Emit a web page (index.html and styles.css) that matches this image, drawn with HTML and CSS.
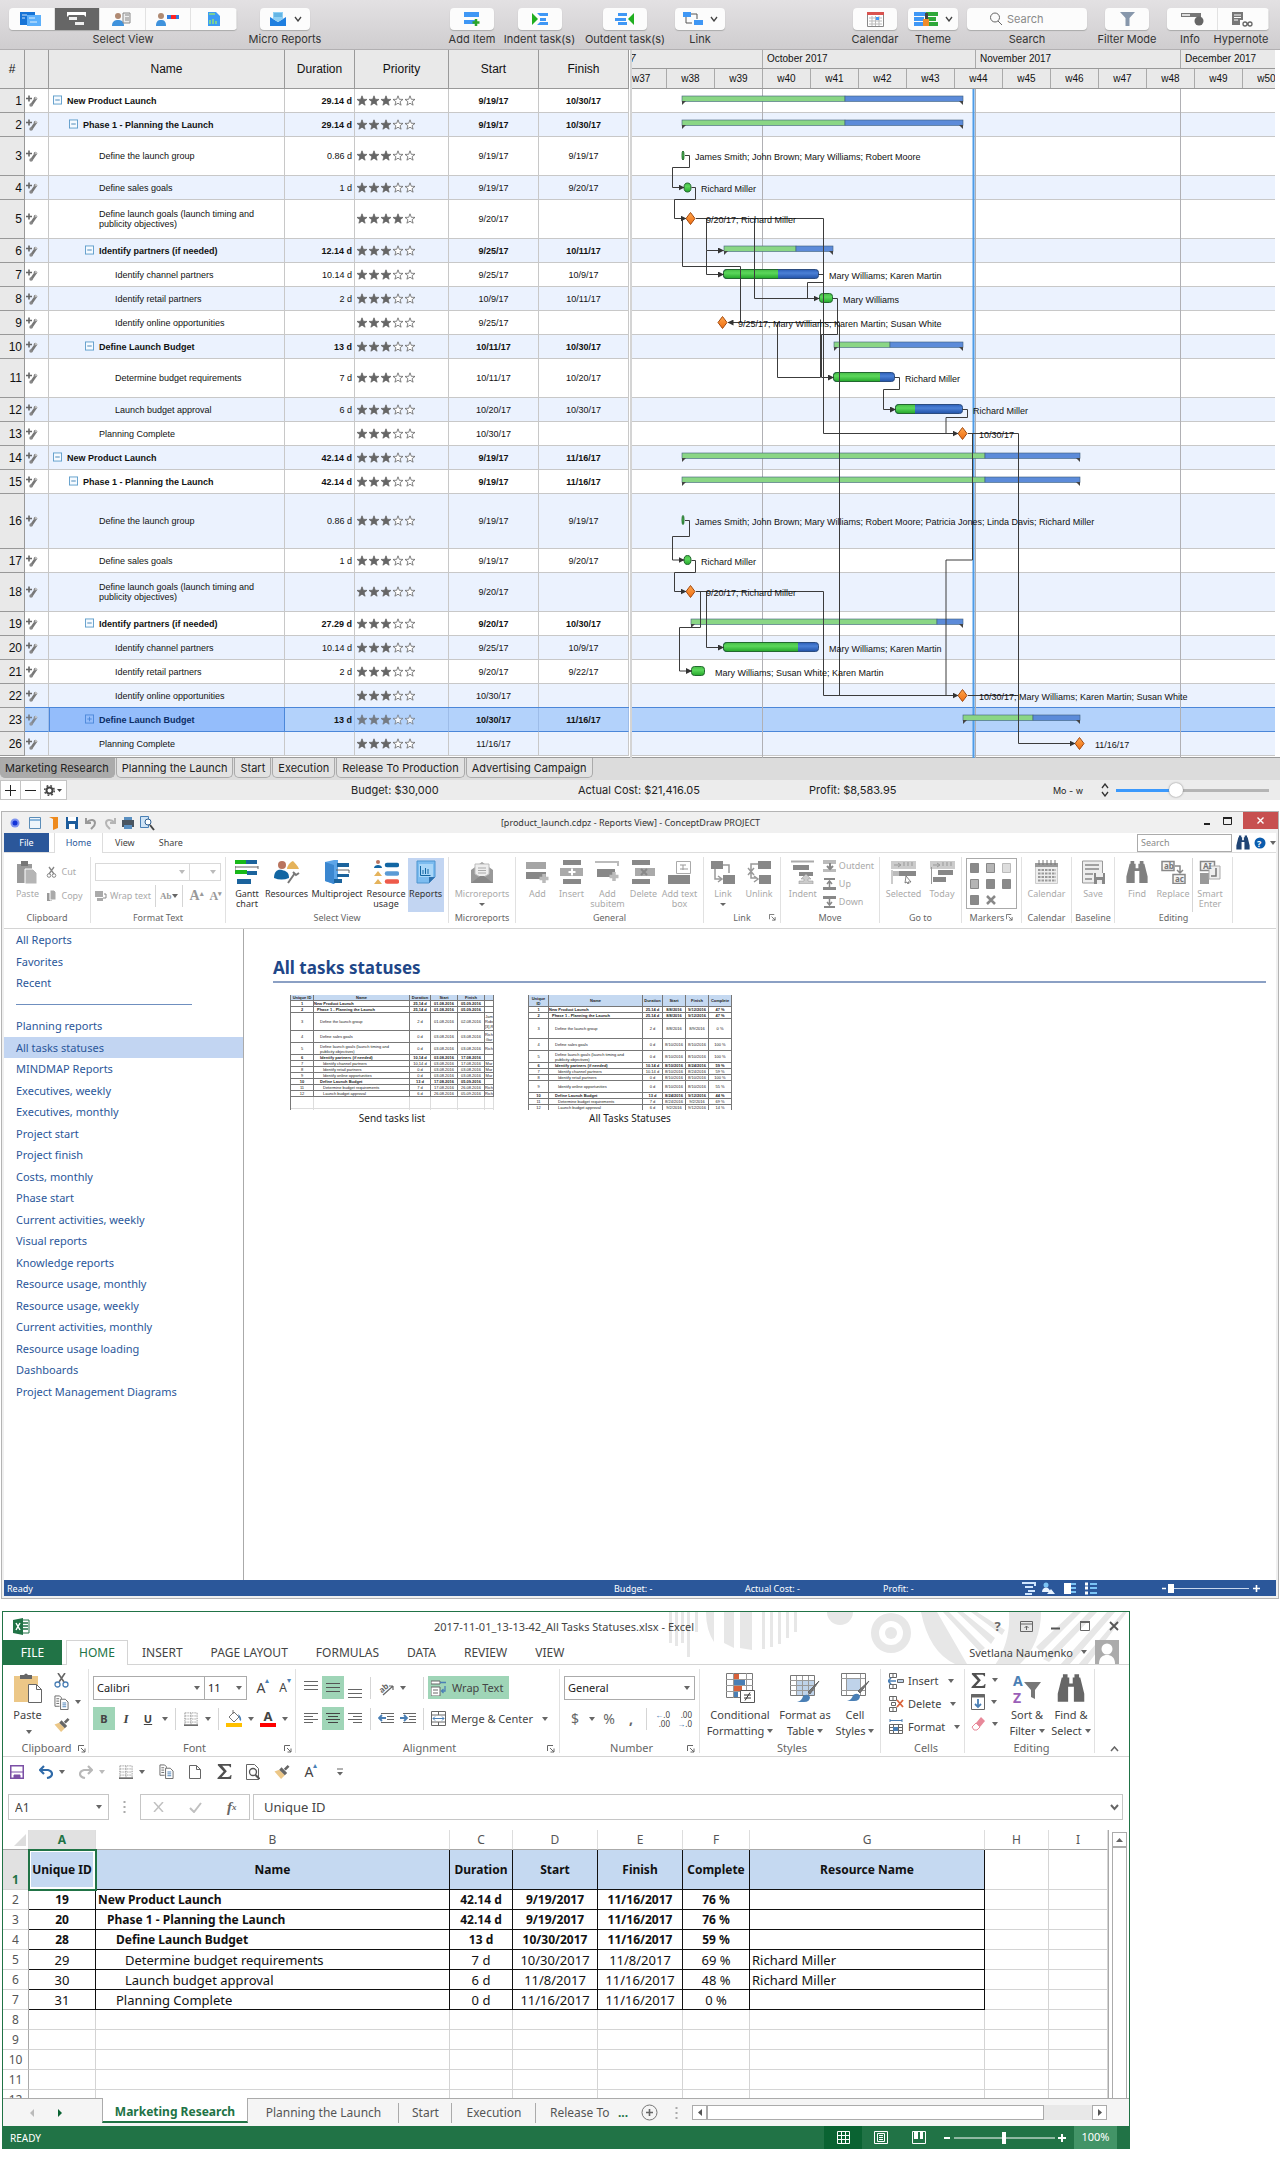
FILE: index.html
```html
<!DOCTYPE html>
<html lang="en">
<head>
<meta charset="utf-8">
<title>Project launch: tasks, reports and export</title>
<link rel="stylesheet" href="styles.css">
</head>
<body>
<svg class="defs" aria-hidden="true">
  <defs>
    <path id="star" d="M0-5.2L1.3-1.7 5-1.6 2.1.7 3.1 4.2 0 2.2-3.1 4.2-2.1.7-5-1.6-1.3-1.7Z" stroke="#666" stroke-width=".8"/>
    <symbol id="s3" viewBox="0 0 60 12"><g fill="#666"><use href="#star" x="6" y="6"/><use href="#star" x="18" y="6"/><use href="#star" x="30" y="6"/></g><g fill="#fff"><use href="#star" x="42" y="6"/><use href="#star" x="54" y="6"/></g></symbol>
    <symbol id="s4" viewBox="0 0 60 12"><g fill="#666"><use href="#star" x="6" y="6"/><use href="#star" x="18" y="6"/><use href="#star" x="30" y="6"/><use href="#star" x="42" y="6"/></g><g fill="#fff"><use href="#star" x="54" y="6"/></g></symbol>
    <symbol id="tool" viewBox="0 0 12 12"><path d="M0 3.5h6M3 .5v6" stroke="#666" stroke-width="1.6"/><path d="M5 10.500l4.500-6.500" stroke="#777" stroke-width="2.600"/><circle cx="9.500" cy="3.500" r="1.800" fill="#888"/><circle cx="5" cy="10" r="1.700" fill="#888"/><circle cx="10" cy="3" r=".8" fill="#fff"/></symbol>
    <symbol id="minus" viewBox="0 0 10 10"><rect x=".5" y=".5" width="9" height="9" fill="#f5faff" stroke="#5b9bc9"/><path d="M2.500 5h5" stroke="#3c7fb1"/></symbol>
    <symbol id="plusbox" viewBox="0 0 10 10"><rect x=".5" y=".5" width="9" height="9" fill="none" stroke="#4b87d9"/><path d="M2.500 5h5M5 2.500v5" stroke="#4b87d9"/></symbol>
    <symbol id="binoc" viewBox="0 0 24 26"><path d="M5 1h4v3h1.500v5h3V4H15V1h4v3h1l3.500 14v7h-9V12h-5v13H.5v-7L4 4h1z"/></symbol>
    <symbol id="sigma" viewBox="0 0 16 16"><path d="M1 0h14v3.500h-1.200C13.500 2 13 1.800 11 1.800H5.500l5 6-5.500 6h6.500c2 0 2.500-.5 3-2h1L15 16H.5v-1.200L7 8 .8 1.200z" fill="#505050"/></symbol>
    <symbol id="brush" viewBox="0 0 16 16"><path d="M0 8l5-2 6 6-4 4z" fill="#ecc787"/><path d="M5 6l2.500-2.500 6 6L11 12zM10 5l4-4 2 2-4 4z" fill="#666"/></symbol>
    <symbol id="copy" viewBox="0 0 16 16"><path d="M6 12H1V1h5l2 2v1M2.500 4h3M2.500 6.500h3M2.500 9h3" fill="none" stroke="#666"/><path d="M7 4.500h5l3 3V15.500H7z" fill="#fff" stroke="#666"/><path d="M9 8.500h4M9 10.500h4M9 12.500h4" stroke="#4a7fb5"/></symbol>
    <symbol id="grid" viewBox="0 0 16 16"><path d="M1 1h14M1 8h14M1 1v14M8 1v14M15 1v14M1 4.500h14M1 11.500h14" stroke="#777" stroke-dasharray="1 1"/><path d="M0 15h16" stroke="#444" stroke-width="1.500"/></symbol>
    <symbol id="launch" viewBox="0 0 8 8"><path d="M.5 6V.5H6M3 3l4 4M7 3.500V7H3.500" fill="none" stroke="#666"/></symbol>
    <linearGradient id="gTask" x2="0" y2="1"><stop offset="0" stop-color="#46bd46"/><stop offset=".4" stop-color="#5bd75b"/><stop offset="1" stop-color="#23a62a"/></linearGradient>
    <linearGradient id="bTask" x2="0" y2="1"><stop offset="0" stop-color="#2c5fb8"/><stop offset=".4" stop-color="#4b80d6"/><stop offset="1" stop-color="#2152a8"/></linearGradient>
    <linearGradient id="oTask" x2="0" y2="1"><stop offset="0" stop-color="#ffa64d"/><stop offset="1" stop-color="#ef6d10"/></linearGradient>
    <path id="mile" d="M0-6L4.500 0 0 6-4.500 0z" fill="url(#oTask)" stroke="#a34a10"/>
    <marker id="arr" viewBox="0 0 6 6" refX="5.500" refY="3" markerWidth="6" markerHeight="6" orient="auto"><path d="M0 0l6 3-6 3z" fill="#333"/></marker>
  </defs>
</svg>

<section class="mac">
  <header class="mac-bar">
    <div class="tool views"><div class="seg">
      <button aria-label="Dashboard"><svg width="22" height="16"><rect width="15" height="13" y="1" fill="#1673d6"/><rect x="7" y="4" width="14" height="11" fill="#5cb0fb"/><path d="M2 4h5M9 7h6M10 11h7M2 7h3" stroke="#fff" opacity=".8"/></svg></button>
      <button class="on" aria-label="Gantt"><svg width="20" height="14"><path d="M0 0h19v5l-2-2H2L0 5z" fill="#fff"/><path d="M2 5h8v3H2zM8 10h9v3H8z" fill="#eee"/></svg></button>
      <button aria-label="Resources"><svg width="20" height="15"><circle cx="6" cy="4" r="3" fill="#b08a72"/><path d="M0 14c0-5 3-6 6-6s6 1 6 6z" fill="#3f92dc"/><path d="M11 1h7v10h-7zM13 3h4M13 6h4M13 8h4" fill="#eee" stroke="#888"/></svg></button>
      <button aria-label="Usage"><svg width="24" height="15"><circle cx="5" cy="4" r="3" fill="#b08a72"/><path d="M0 14c0-5 2-6 5-6s5 1 5 6z" fill="#3f92dc"/><path d="M11 3h12v4H11z" fill="#2f7de0"/><path d="M15 3h5v4h-5z" fill="#f22"/></svg></button>
      <button aria-label="Reports"><svg width="14" height="16"><path d="M1 1h8l4 4v10H1z" fill="#3b9bf4"/><path d="M2 3h6M3 13V9M6 13V8M9 13v-3" stroke="#8fe07a" stroke-width="1.500"/></svg></button>
    </div><span>Select View</span></div>
    <div class="tool micro"><button class="wide"><svg width="18" height="16"><path d="M1 6l8 5 8-5v9H1z" fill="#1f7fe0"/><path d="M4 1h10v7l-5 3-5-3z" fill="#8fd0f5"/><path d="M5 3h8M5 5h8" stroke="#3b9bd4"/></svg><svg width="8" height="6"><path d="M1 1l3 4 3-4" fill="none" stroke="#444" stroke-width="1.300"/></svg></button><span>Micro Reports</span></div>
    <div class="edit">
      <div class="tool add"><button><svg width="18" height="16"><path d="M1 1h15v5H1zM1 9h13v4H1z" fill="#3f97f5"/><path d="M13 8v7M9.500 11.500h7" stroke="#2ba52b" stroke-width="2.500"/></svg></button><span>Add Item</span></div>
      <div class="tool indent"><button><svg width="18" height="14"><path d="M1 1l6 6-6 6z" fill="#1fae1f"/><path d="M6 1h11v3H9zM9 6h6v3H9zM6 13h11v-3H9z" fill="#3f97f5"/></svg></button><span>Indent task(s)</span></div>
      <div class="tool outdent"><button><svg width="20" height="14"><path d="M19 1l-6 6 6 6z" fill="#1fae1f"/><path d="M3 1h9v3H3zM0 6h11v3H0zM3 10h9v3H3z" fill="#3f97f5"/></svg></button><span>Outdent task(s)</span></div>
      <div class="tool link"><button class="wide"><svg width="20" height="14"><path d="M0 0h8v5H0zM11 8h9v5h-9z" fill="#3f97f5"/><path d="M8 2h6v5M3 5v6h6" fill="none" stroke="#555"/></svg><svg width="8" height="6"><path d="M1 1l3 4 3-4" fill="none" stroke="#444" stroke-width="1.300"/></svg></button><span>Link</span></div>
    </div>
    <div class="right">
      <div class="tool cal"><button><svg width="17" height="15"><path d="M.5.5h16v14H.5z" fill="#fff" stroke="#888"/><path d="M0 0h17v3H0z" fill="#d9534f"/><path d="M2 6h13M2 9h13M2 12h13M5 4v10M8.500 4v10M12 4v10" stroke="#bbb"/><path d="M9 5h3v3H9z" fill="#3f97f5"/></svg></button><span>Calendar</span></div>
      <div class="tool theme"><button class="wide"><svg width="24" height="14"><path d="M0 0h12v4H0zM0 5h10v4H0zM0 10h12v4H0z" fill="#3f97f5"/><path d="M12 0h12v4H12zM14 5h8v4h-8zM12 10h12v4H12z" fill="#2fa83a"/><path d="M11 1h3v7h-3z" fill="#444"/><path d="M9 7h6v7H9z" fill="#ef8d2c"/></svg><svg width="8" height="6"><path d="M1 1l3 4 3-4" fill="none" stroke="#444" stroke-width="1.300"/></svg></button><span>Theme</span></div>
      <div class="tool find"><div class="search"><svg width="14" height="14"><circle cx="6" cy="5.500" r="4.500" fill="none" stroke="#666"/><path d="M9 9l4 4" stroke="#666"/></svg><input type="search" id="mq" placeholder="Search"></div><label for="mq">Search</label></div>
      <div class="tool filter"><button><svg width="15" height="14"><path d="M0 0h15L9.500 6v8h-4V6z" fill="#8797ab"/></svg></button><span>Filter Mode</span></div>
      <div class="tool info"><div class="seg"><button aria-label="Info"><svg width="24" height="14"><path d="M1 1h20v4H1z" fill="#777"/><path d="M2 2h8v2H2z" fill="#ddd"/><circle cx="19" cy="9" r="4.500" fill="#666"/></svg></button><button aria-label="Hypernote"><svg width="22" height="15"><path d="M0 0h11v8H8v5H0z" fill="#777"/><path d="M2 3h7M2 5.500h7M2 8h4" stroke="#fff"/><path d="M11 12a2 2 0 1 1 4 0 2 2 0 1 1-4 0M16 12a2 2 0 1 1 4 0 2 2 0 1 1-4 0" fill="none" stroke="#666" stroke-width="1.300"/></svg></button></div><div class="pair"><span>Info</span><span>Hypernote</span></div></div>
    </div>
  </header>

  <div class="project">
    <table class="tasks">
      <colgroup><col class="k1"><col class="k2"><col class="k3"><col class="k4"><col class="k5"><col class="k6"><col class="k6"></colgroup>
      <thead><tr><th>#</th><th></th><th>Name</th><th>Duration</th><th>Priority</th><th>Start</th><th>Finish</th></tr></thead>
      <tbody>
      <tr class="b"><td>1</td><td><svg class="tl"><use href="#tool"/></svg></td><td class="l0"><svg class="tg"><use href="#minus"/></svg>New Product Launch</td><td>29.14 d</td><td><svg class="st"><use href="#s3"/></svg></td><td>9/19/17</td><td>10/30/17</td></tr>
      <tr class="b"><td>2</td><td><svg class="tl"><use href="#tool"/></svg></td><td class="l1"><svg class="tg"><use href="#minus"/></svg>Phase 1 - Planning the Launch</td><td>29.14 d</td><td><svg class="st"><use href="#s3"/></svg></td><td>9/19/17</td><td>10/30/17</td></tr>
      <tr class="h2"><td>3</td><td><svg class="tl"><use href="#tool"/></svg></td><td class="l3">Define the launch group</td><td>0.86 d</td><td><svg class="st"><use href="#s3"/></svg></td><td>9/19/17</td><td>9/19/17</td></tr>
      <tr><td>4</td><td><svg class="tl"><use href="#tool"/></svg></td><td class="l3">Define sales goals</td><td>1 d</td><td><svg class="st"><use href="#s3"/></svg></td><td>9/19/17</td><td>9/20/17</td></tr>
      <tr class="h2"><td>5</td><td><svg class="tl"><use href="#tool"/></svg></td><td class="l3">Define launch goals (launch timing and<br>publicity objectives)</td><td></td><td><svg class="st"><use href="#s4"/></svg></td><td>9/20/17</td><td></td></tr>
      <tr class="b"><td>6</td><td><svg class="tl"><use href="#tool"/></svg></td><td class="l2"><svg class="tg"><use href="#minus"/></svg>Identify partners (if needed)</td><td>12.14 d</td><td><svg class="st"><use href="#s3"/></svg></td><td>9/25/17</td><td>10/11/17</td></tr>
      <tr><td>7</td><td><svg class="tl"><use href="#tool"/></svg></td><td class="l4">Identify channel partners</td><td>10.14 d</td><td><svg class="st"><use href="#s3"/></svg></td><td>9/25/17</td><td>10/9/17</td></tr>
      <tr><td>8</td><td><svg class="tl"><use href="#tool"/></svg></td><td class="l4">Identify retail partners</td><td>2 d</td><td><svg class="st"><use href="#s3"/></svg></td><td>10/9/17</td><td>10/11/17</td></tr>
      <tr><td>9</td><td><svg class="tl"><use href="#tool"/></svg></td><td class="l4">Identify online opportunities</td><td></td><td><svg class="st"><use href="#s3"/></svg></td><td>9/25/17</td><td></td></tr>
      <tr class="b"><td>10</td><td><svg class="tl"><use href="#tool"/></svg></td><td class="l2"><svg class="tg"><use href="#minus"/></svg>Define Launch Budget</td><td>13 d</td><td><svg class="st"><use href="#s3"/></svg></td><td>10/11/17</td><td>10/30/17</td></tr>
      <tr class="h2"><td>11</td><td><svg class="tl"><use href="#tool"/></svg></td><td class="l4">Determine budget requirements</td><td>7 d</td><td><svg class="st"><use href="#s3"/></svg></td><td>10/11/17</td><td>10/20/17</td></tr>
      <tr><td>12</td><td><svg class="tl"><use href="#tool"/></svg></td><td class="l4">Launch budget approval</td><td>6 d</td><td><svg class="st"><use href="#s3"/></svg></td><td>10/20/17</td><td>10/30/17</td></tr>
      <tr><td>13</td><td><svg class="tl"><use href="#tool"/></svg></td><td class="l3">Planning Complete</td><td></td><td><svg class="st"><use href="#s3"/></svg></td><td>10/30/17</td><td></td></tr>
      <tr class="b"><td>14</td><td><svg class="tl"><use href="#tool"/></svg></td><td class="l0"><svg class="tg"><use href="#minus"/></svg>New Product Launch</td><td>42.14 d</td><td><svg class="st"><use href="#s3"/></svg></td><td>9/19/17</td><td>11/16/17</td></tr>
      <tr class="b"><td>15</td><td><svg class="tl"><use href="#tool"/></svg></td><td class="l1"><svg class="tg"><use href="#minus"/></svg>Phase 1 - Planning the Launch</td><td>42.14 d</td><td><svg class="st"><use href="#s3"/></svg></td><td>9/19/17</td><td>11/16/17</td></tr>
      <tr class="h3"><td>16</td><td><svg class="tl"><use href="#tool"/></svg></td><td class="l3">Define the launch group</td><td>0.86 d</td><td><svg class="st"><use href="#s3"/></svg></td><td>9/19/17</td><td>9/19/17</td></tr>
      <tr><td>17</td><td><svg class="tl"><use href="#tool"/></svg></td><td class="l3">Define sales goals</td><td>1 d</td><td><svg class="st"><use href="#s3"/></svg></td><td>9/19/17</td><td>9/20/17</td></tr>
      <tr class="h2"><td>18</td><td><svg class="tl"><use href="#tool"/></svg></td><td class="l3">Define launch goals (launch timing and<br>publicity objectives)</td><td></td><td><svg class="st"><use href="#s3"/></svg></td><td>9/20/17</td><td></td></tr>
      <tr class="b"><td>19</td><td><svg class="tl"><use href="#tool"/></svg></td><td class="l2"><svg class="tg"><use href="#minus"/></svg>Identify partners (if needed)</td><td>27.29 d</td><td><svg class="st"><use href="#s3"/></svg></td><td>9/20/17</td><td>10/30/17</td></tr>
      <tr><td>20</td><td><svg class="tl"><use href="#tool"/></svg></td><td class="l4">Identify channel partners</td><td>10.14 d</td><td><svg class="st"><use href="#s3"/></svg></td><td>9/25/17</td><td>10/9/17</td></tr>
      <tr><td>21</td><td><svg class="tl"><use href="#tool"/></svg></td><td class="l4">Identify retail partners</td><td>2 d</td><td><svg class="st"><use href="#s3"/></svg></td><td>9/20/17</td><td>9/22/17</td></tr>
      <tr><td>22</td><td><svg class="tl"><use href="#tool"/></svg></td><td class="l4">Identify online opportunities</td><td></td><td><svg class="st"><use href="#s3"/></svg></td><td>10/30/17</td><td></td></tr>
      <tr class="b sel"><td>23</td><td><svg class="tl"><use href="#tool"/></svg></td><td class="l2"><svg class="tg"><use href="#plusbox"/></svg>Define Launch Budget</td><td>13 d</td><td><svg class="st"><use href="#s3"/></svg></td><td>10/30/17</td><td>11/16/17</td></tr>
      <tr><td>26</td><td><svg class="tl"><use href="#tool"/></svg></td><td class="l3">Planning Complete</td><td></td><td><svg class="st"><use href="#s3"/></svg></td><td>11/16/17</td><td></td></tr>
      </tbody>
    </table>
    <div class="gantt">
      <div class="months"><span class="m1">7</span><span class="m2">October 2017</span><span class="m3">November 2017</span><span>December 2017</span></div>
      <div class="weeks"><span>w37</span><span>w38</span><span>w39</span><span>w40</span><span>w41</span><span>w42</span><span>w43</span><span>w44</span><span>w45</span><span>w46</span><span>w47</span><span>w48</span><span>w49</span><span>w50</span></div>
      <svg class="chart" height="669">
        <g transform="translate(0 -89)">
          <g fill="#ebf2fe"><rect y="113" width="100%" height="24"/><rect y="176" width="100%" height="24"/><rect y="239" width="100%" height="24"/><rect y="287" width="100%" height="24"/><rect y="335" width="100%" height="24"/><rect y="398" width="100%" height="24"/><rect y="446" width="100%" height="24"/><rect y="494" width="100%" height="55"/><rect y="573" width="100%" height="39"/><rect y="636" width="100%" height="24"/><rect y="684" width="100%" height="24"/><rect y="732" width="100%" height="24"/></g>
          <g fill="#c8c8c8"><rect y="112" width="100%" height="1"/><rect y="136" width="100%" height="1"/><rect y="175" width="100%" height="1"/><rect y="199" width="100%" height="1"/><rect y="238" width="100%" height="1"/><rect y="262" width="100%" height="1"/><rect y="286" width="100%" height="1"/><rect y="310" width="100%" height="1"/><rect y="334" width="100%" height="1"/><rect y="358" width="100%" height="1"/><rect y="397" width="100%" height="1"/><rect y="421" width="100%" height="1"/><rect y="445" width="100%" height="1"/><rect y="469" width="100%" height="1"/><rect y="493" width="100%" height="1"/><rect y="548" width="100%" height="1"/><rect y="572" width="100%" height="1"/><rect y="611" width="100%" height="1"/><rect y="635" width="100%" height="1"/><rect y="659" width="100%" height="1"/><rect y="683" width="100%" height="1"/><rect y="755" width="100%" height="1"/></g>
          <rect y="707" width="100%" height="25" fill="#4b87d9"/><rect y="708" width="100%" height="23" fill="#b3d2fb"/>
        </g>
        <g transform="translate(-632 -89)">
          <path d="M762.500 89v669M975.500 89v669M1180.500 89v669" stroke="#b0b0b4"/>
          <path d="M973.500 89v669" stroke="#4d9be8" stroke-width="2"/>
          <g stroke="#3f5f7c" stroke-width=".6">
            <g fill="#8ad685"><rect x="682" y="96" width="163" height="5.500"/><rect x="682" y="120" width="163" height="5.500"/><rect x="724" y="246" width="72" height="5.500"/><rect x="834" y="342" width="56" height="5.500"/><rect x="682" y="453" width="303" height="5.500"/><rect x="682" y="477" width="303" height="5.500"/><rect x="691" y="619" width="246" height="5.500"/><rect x="963" y="715" width="70" height="5.500"/></g>
            <g fill="#5c8bd9"><rect x="845" y="96" width="118" height="5.500"/><rect x="845" y="120" width="118" height="5.500"/><rect x="796" y="246" width="37" height="5.500"/><rect x="890" y="342" width="73" height="5.500"/><rect x="985" y="453" width="95" height="5.500"/><rect x="985" y="477" width="95" height="5.500"/><rect x="937" y="619" width="26" height="5.500"/><rect x="1033" y="715" width="47" height="5.500"/></g>
          </g>
          <path fill="#444" d="M682 101h4l-4 4zM963 101h-4l4 4zM682 125h4l-4 4zM963 125h-4l4 4zM724 251h4l-4 4zM833 251h-4l4 4zM834 347h4l-4 4zM963 347h-4l4 4zM682 458h4l-4 4zM1080 458h-4l4 4zM682 482h4l-4 4zM1080 482h-4l4 4zM691 624h4l-4 4zM963 624h-4l4 4zM963 720h4l-4 4zM1080 720h-4l4 4z"/>
          <g fill="url(#bTask)" stroke="#2b4c80"><rect x="723.500" y="269.500" width="95" height="9" rx="3"/><rect x="833.500" y="372.500" width="61" height="9" rx="3"/><rect x="895.500" y="404.500" width="67" height="9" rx="3"/><rect x="723.500" y="642.500" width="95" height="9" rx="3"/></g>
          <g fill="url(#gTask)" stroke="#22682f"><path d="M778 269.500h-51q-3.500 0-3.500 3v3q0 3 3.500 3h51"/><path d="M880 372.500h-43q-3.500 0-3.500 3v3q0 3 3.500 3h43"/><path d="M915 404.500h-16q-3.500 0-3.500 3v3q0 3 3.500 3h16"/><path d="M798 642.500h-71q-3.500 0-3.500 3v3q0 3 3.500 3h71"/><rect x="819.500" y="293.500" width="13" height="9" rx="3"/><rect x="691.500" y="666.500" width="13" height="9" rx="3"/><ellipse cx="683" cy="155.500" rx="1" ry="4.500"/><ellipse cx="687.500" cy="187.500" rx="3.500" ry="4.500"/><ellipse cx="683" cy="520" rx="1" ry="4.500"/><ellipse cx="687.500" cy="560" rx="3.500" ry="4.500"/></g>
          <use href="#mile" x="690.500" y="218.500"/><use href="#mile" x="722.500" y="322.500"/><use href="#mile" x="962.500" y="433.500"/><use href="#mile" x="690.500" y="591.500"/><use href="#mile" x="962.500" y="695.500"/><use href="#mile" x="1079.500" y="743.500"/>
          <g fill="none" stroke="#3c3c3c">
            <path d="M696 218.500h127.500M682.500 218.500v48h58v56M706.500 218.500v32M754.500 218.500v80M818.500 274.500h5M823.500 282.500h-16v16M728 322.500h111.500v373M777.500 322.500v55h43v-58M962.500 409.500h5v8h-21.500v16M972.500 433.500v126.500h-26.500v135.500M968 695.500h50.500"/>
            <g marker-end="url(#arr)"><path d="M685 155.500h4.500v12h-17v20h11.500"/><path d="M691.500 187.500h4v12h-21v19h11.500"/><path d="M823.500 218.500v215H958"/><path d="M706.500 250.500h17"/><path d="M706.500 250.500v24h17"/><path d="M754.500 298.500H819"/><path d="M740.500 322.500H728"/><path d="M833 298.500h4.500v36h-16v43h12"/><path d="M895 377.500h4.500v12h-16v20h12"/><path d="M968 433.500h50.500v310H1075"/><path d="M685 520.500h4.500v16h-17v23.500h11.500"/><path d="M691.500 560.500h4v12h-21v19h11.500"/><path d="M696 591.500h127.500v104H958"/><path d="M706.500 591.500v56h17"/><path d="M700.500 591.500v36h-21v43.500h12"/></g>
          </g>
          <g class="who"><text x="695" y="160">James Smith; John Brown; Mary Williams; Robert Moore</text><text x="701" y="192">Richard Miller</text><text x="706" y="223">9/20/17; Richard Miller</text><text x="829" y="279">Mary Williams; Karen Martin</text><text x="843" y="303">Mary Williams</text><text x="738" y="327">9/25/17; Mary Williams; Karen Martin; Susan White</text><text x="905" y="382">Richard Miller</text><text x="973" y="414">Richard Miller</text><text x="979" y="438">10/30/17</text><text x="695" y="525">James Smith; John Brown; Mary Williams; Robert Moore; Patricia Jones; Linda Davis; Richard Miller</text><text x="701" y="565">Richard Miller</text><text x="706" y="596">9/20/17; Richard Miller</text><text x="829" y="652">Mary Williams; Karen Martin</text><text x="715" y="676">Mary Williams; Susan White; Karen Martin</text><text x="979" y="700">10/30/17; Mary Williams; Karen Martin; Susan White</text><text x="1095" y="748">11/16/17</text></g>
        </g>
      </svg>
    </div>
  </div>
  <nav class="mac-tabs"><a href="#" class="on">Marketing Research</a><a href="#">Planning the Launch</a><a href="#">Start</a><a href="#">Execution</a><a href="#">Release To Production</a><a href="#">Advertising Campaign</a></nav>
  <footer class="mac-foot">
    <div class="ops"><button aria-label="Add"><svg width="11" height="11"><path d="M5.500 0v11M0 5.500h11" stroke="#222"/></svg></button><button aria-label="Remove"><svg width="11" height="11"><path d="M0 5.500h11" stroke="#222"/></svg></button><button aria-label="Settings" class="gear"><svg width="20" height="11"><circle cx="5.500" cy="5.500" r="3" fill="none" stroke="#444" stroke-width="2"/><circle cx="5.500" cy="5.500" r="4.800" fill="none" stroke="#444" stroke-dasharray="1.800 2" stroke-width="1.500"/><path d="M13 4h5l-2.500 3z" fill="#444"/></svg></button></div>
    <span class="f1">Budget: $30,000</span><span class="f2">Actual Cost: $21,416.05</span><span class="f3">Profit: $8,583.95</span>
    <div class="scale"><span>Mo - w</span><svg width="8" height="14"><path d="M1 5l3-4 3 4M1 9l3 4 3-4" fill="none" stroke="#333" stroke-width="1.300"/></svg><input type="range" aria-label="Time scale" min="0" max="100" value="38"></div>
  </footer>
</section>

<section class="win">
  <header class="wt">
    <svg width="150" height="16" class="qi"><circle cx="8" cy="8" r="4.500" fill="#7d92ee"/><circle cx="8" cy="8" r="2.500" fill="#1233d8"/><path d="M22.500 2.500h11v11h-11z" fill="#eef5fb" stroke="#5b8db8"/><path d="M23 5h10" stroke="#8bb7dc" stroke-width="2"/><path d="M42 2h9v11l-5 2V4z" fill="#ee8a1d"/><path d="M59 2h12v12H59z" fill="#1c5c9c"/><path d="M61 2h8v4h-8zM62 9h6v5h-6z" fill="#fff"/><path d="M79 8c5-5 9-3 9 0s-2 4-4 6M79 3v5h5" fill="none" stroke="#999" stroke-width="2"/><path d="M108 8c-5-5-9-3-9 0s2 4 4 6M108 3v5h-5" fill="none" stroke="#b5b5b5" stroke-width="2"/><path d="M115 5h12v7h-12z" fill="#4a5560"/><path d="M117 2h8v3h-8zM117 10h8v4h-8z" fill="#5a8fc0"/><path d="M133.500 1.500h8v11h-8z" fill="#cfe3f5" stroke="#4a80b5"/><circle cx="141" cy="7" r="3" fill="#fff" stroke="#2f5f90"/><path d="M143 10l4 5" stroke="#444" stroke-width="2"/></svg>
    <h1>[product_launch.cdpz - Reports View] - ConceptDraw PROJECT</h1>
    <div class="wb"><button aria-label="Minimize"><svg width="8" height="8"><path d="M1 7h6" stroke="#222" stroke-width="2"/></svg></button><button aria-label="Maximize"><svg width="9" height="8"><path d="M.5 1h8v6.500h-8z" fill="none" stroke="#222"/><path d="M0 1h9" stroke="#222" stroke-width="2"/></svg></button><button class="x" aria-label="Close"><svg width="7" height="7"><path d="M.5.5l6 6M6.500.5l-6 6" stroke="#fff" stroke-width="1.400"/></svg></button></div>
  </header>
  <nav class="wtabs"><button class="file">File</button><a href="#" class="on">Home</a><a href="#">View</a><a href="#">Share</a><div class="ws"><input type="search" placeholder="Search" aria-label="Search reports"><svg width="14" height="15" fill="#1f4474"><use href="#binoc"/></svg><svg width="12" height="12"><circle cx="6" cy="6" r="5.500" fill="#0b5cad"/><text x="3" y="10" class="q">?</text></svg><i class="car"></i></div></nav>
  <div class="ribbon">
    <div class="g g1"><div class="gb"><button class="big dis w32"><svg width="22" height="24"><path d="M1 4h15v19H1z" fill="#9a9a9a"/><path d="M5 1h7v5H5z" fill="#777"/><path d="M9 9h8l4 4v11H9z" fill="#b5b5b5" stroke="#fff"/></svg><span>Paste</span></button><div class="col2"><button class="sm dis"><svg width="12" height="12"><path d="M3 1l5 7M8 1L3 8" stroke="#888" stroke-width="1.300"/><circle cx="3" cy="9.500" r="1.800" fill="none" stroke="#888"/><circle cx="8" cy="9.500" r="1.800" fill="none" stroke="#888"/></svg>Cut</button><button class="sm dis"><svg width="12" height="12"><path d="M1 3h5v8H1z" fill="#999"/><path d="M4 0h4l2 2v8H4z" fill="#aaa" stroke="#fff"/></svg>Copy</button></div></div><b>Clipboard</b></div>
    <div class="g g2"><div class="gb v"><div class="combos"><span class="cb c95"><select aria-label="Font" disabled><option></option></select></span><span class="cb c31"><select aria-label="Size" disabled><option></option></select></span></div><div class="ftrow"><button class="sm dis"><svg width="12" height="12"><path d="M0 1h8v6H0zM2 8h6v3H2z" fill="#aaa"/><path d="M9 4h2v4H8" fill="none" stroke="#888"/></svg>Wrap text</button><i class="vs"></i><button class="ab">Ab<i class="car"></i></button><i class="vs"></i><button class="a1">A<sup>▴</sup></button><button class="a2">A<sup>▾</sup></button></div></div><b>Format Text</b></div>
    <div class="g g3"><div class="gb">
      <button class="big w33"><svg width="24" height="24"><path d="M0 0h11v4H0zM0 10h12v4H0z" fill="#18b818"/><path d="M11 0h11v4H11zM2 19h14v5H2zM12 11h10v4H12z" fill="#1b639c"/><path d="M0 7h23M0 6v5M23 6v3" stroke="#666"/></svg><span>Gantt<br>chart</span></button>
      <button class="big w46"><svg width="26" height="24"><circle cx="8" cy="5" r="4" fill="#b9745e"/><path d="M0 18c0-7 4-9 8-8s7 2 7 8c-5 2-10 2-15 0z" fill="#1266a3"/><path d="M13 9c0-3 3-7 6-8 2 2 5 5 6 8z" fill="#e5b35b"/><path d="M14 23l7-10M19 12l3 3 3-2" stroke="#777" stroke-width="2" fill="none"/></svg><span>Resources</span></button>
      <button class="big w55"><svg width="26" height="24"><path d="M1 2l9-2h4v21l-4 3-9-3z" fill="#5da5e8"/><path d="M1 2l9 3v19l-9-3z" fill="#3b87d0"/><path d="M13 3h12v4H13zM13 14h12v3H13zM10 19h8v4h-8z" fill="#1b639c"/><path d="M12 10h13v3" stroke="#666" fill="none"/></svg><span>Multiproject</span></button>
      <button class="big w43"><svg width="26" height="24"><circle cx="5" cy="2" r="2" fill="#b9745e"/><path d="M1 8c0-4 8-4 8 0z" fill="#1266a3"/><path d="M1 16l4-5 4 5zM1 24l4-5 4 5z" fill="#e5b35b"/><path d="M14 5h10" stroke="#1266a3" stroke-width="4.500" stroke-linecap="round"/><path d="M14 13.500h10" stroke="#5b9bd5" stroke-width="4.500" stroke-linecap="round"/><path d="M14 21.500h10" stroke="#ee5a4a" stroke-width="4.500" stroke-linecap="round"/></svg><span>Resource<br>usage</span></button>
      <button class="big w36 on"><svg width="20" height="24"><path d="M1 1h18v16l-6 6H1z" fill="#7cbcf0" stroke="#4d94cf"/><path d="M3 4h14v13H3z" fill="#a9d6f8"/><path d="M4.500 6v9.500h10M7 14v-4M9.500 14V8M12 14V9" fill="none" stroke="#1266a3"/><path d="M13 23v-6h6z" fill="#2f72b0"/></svg><span>Reports</span></button>
    </div><b>Select View</b></div>
    <div class="g g4"><div class="gb"><button class="big dis w64"><svg width="24" height="24"><path d="M1 10L12 2l11 8v13H1z" fill="#999"/><path d="M5 4h14v10l-7 4-7-4z" fill="#eee" stroke="#bbb"/><path d="M8 8h8M8 10.500h8M8 13h8" stroke="#aaa"/><path d="M1 23l9-7h4l9 7z" fill="#888"/></svg><span>Microreports</span><i class="car"></i></button></div><b>Microreports</b></div>
    <div class="g g5"><div class="gb">
      <button class="big dis w34"><svg width="24" height="24"><path d="M0 2h20v7H0z" fill="#a5a5a5"/><path d="M0 12h20v7H0z" fill="#888"/><path d="M18 14v9M13.500 18.500h9" stroke="#bbb" stroke-width="3.500"/></svg><span>Add</span></button>
      <button class="big dis w34"><svg width="24" height="24"><path d="M3 0h18v5H3zM3 19h18v5H3z" fill="#888"/><path d="M0 8h23v8H0z" fill="#aaa"/><path d="M12 8.500v7M8.500 12h7" stroke="#fff" stroke-width="2"/></svg><span>Insert</span></button>
      <button class="big dis w38"><svg width="25" height="24"><path d="M0 2h23v4" stroke="#bbb" stroke-width="2" fill="none"/><path d="M2 9h18v8H2z" fill="#888"/><path d="M19 12v9M14.500 16.500h9" stroke="#bbb" stroke-width="3.500"/></svg><span>Add<br>subitem</span></button>
      <button class="big dis w34"><svg width="24" height="24"><path d="M0 0h18v5H0zM0 19h18v5H0z" fill="#888"/><path d="M3 8h20v8H3z" fill="#aaa"/><path d="M9 9l6 6M15 9l-6 6" stroke="#888" stroke-width="2"/></svg><span>Delete</span></button>
      <button class="big dis w38"><svg width="26" height="24"><path d="M9.500 1.500h14v12h-14z" fill="none" stroke="#aaa"/><path d="M13 5h6M13 9h8M16 5v5" stroke="#999"/><path d="M1 15h22v9H1z" fill="#888"/></svg><span>Add text<br>box</span></button>
    </div><b>General</b></div>
    <div class="g g6"><div class="gb"><button class="big dis w34"><svg width="24" height="24"><path d="M0 1h12v8H0zM12 15h12v9H12z" fill="#888"/><path d="M12 5h6v8M4 9v10h6M7 16l4 3-4 3" fill="none" stroke="#999" stroke-width="1.500"/></svg><span>Link</span><i class="car"></i></button><button class="big dis w38"><svg width="24" height="24"><path d="M11 1h13v8H11zM12 15h12v9H12z" fill="#888"/><path d="M11 4H4v14h6M7 16l4 3-4 3M1 8l6 7M7 8l-6 7" fill="none" stroke="#999" stroke-width="1.500"/></svg><span>Unlink</span></button></div><b>Link<svg width="7" height="7" class="far"><use href="#launch"/></svg></b></div>
    <div class="g g7"><div class="gb"><button class="big dis w34"><svg width="24" height="24"><path d="M0 1.500h23" stroke="#aaa" stroke-width="2"/><path d="M2 5h16v5H2zM8 12h14v4H8z" fill="#888"/><path d="M15 14l5 5h-3v2h5v3H8v-3h5v-2h-3z" fill="#ccc" stroke="#999" stroke-width=".6"/></svg><span>Indent</span></button><div class="col3"><button class="sm dis"><svg width="13" height="12"><path d="M0 0h13v4H0zM0 9h13v3H0z" fill="#bbb"/><path d="M7 3v5M4 6l3 3 3-3" stroke="#888" stroke-width="2" fill="none"/></svg>Outdent</button><button class="sm dis"><svg width="13" height="12"><path d="M1 0h11v2H1zM0 9h13v3H0z" fill="#888"/><path d="M6.500 3v6M4 6l2.500-3L9 6" stroke="#888" stroke-width="1.500" fill="none"/></svg>Up</button><button class="sm dis"><svg width="13" height="12"><path d="M1 10h11v2H1zM0 0h13v3H0z" fill="#888"/><path d="M6.500 3v6M4 6l2.500 3L9 6" stroke="#888" stroke-width="1.500" fill="none"/></svg>Down</button></div></div><b>Move</b></div>
    <div class="g g8"><div class="gb"><button class="big dis w43"><svg width="26" height="24"><path d="M0 1h25v8H0z" fill="#ccc"/><path d="M1 24V10" stroke="#999"/><path d="M2 11h14v5H2z" fill="#bbb"/><path d="M8 11h17v5H8z" fill="#888"/><path d="M3 5h6M7 3l3 2-3 2M13 2v4M17 2v4M21 2v4" fill="none" stroke="#999"/><path d="M15 16l5 6h-3l1 2-1 .5-1-2.500-2 1z" fill="#fff" stroke="#666" stroke-width=".8"/></svg><span>Selected</span></button><button class="big dis w34"><svg width="25" height="24"><path d="M0 1h25v8H0z" fill="#ccc"/><path d="M1.500 24V7" stroke="#999"/><path d="M8 10h15v5H8zM3 17h13v5H3z" fill="#888"/><path d="M3 5h6M7 3l3 2-3 2M13 2v4M17 2v4M21 2v4" fill="none" stroke="#999"/></svg><span>Today</span></button></div><b>Go to</b></div>
    <div class="g g9"><div class="gb"><svg class="marks" width="51" height="51"><rect x=".5" y=".5" width="50" height="50" fill="#fff" stroke="#aaa"/><g stroke="#888"><path d="M4.500 5.500h8v9h-8zM20.500 21.500h8v9h-8zM36.500 21.500h8v9h-8zM4.500 37.500h8v9h-8z" fill="#8a8a8a"/><path d="M20.500 5.500h8v9h-8zM4.500 21.500h8v9h-8z" fill="#b5b5b5"/><path d="M36.500 5.500h8v9h-8z" fill="#ddd" stroke="#bbb"/></g><path d="M21 38l8 8M29 38l-8 8" stroke="#888" stroke-width="2.500"/></svg></div><b>Markers<svg width="7" height="7"><use href="#launch"/></svg></b></div>
    <div class="g g10"><div class="gb"><button class="big dis w43"><svg width="26" height="24"><path d="M1.500 4.500h22v19h-22z" fill="#eee" stroke="#ccc"/><path d="M1 3h23v4H1z" fill="#999"/><path d="M5 0v5M9 0v5M13 0v5M17 0v5M21 0v5" stroke="#777"/><path d="M4 10h18M4 13.500h18M4 17h18M4 20.500h18" stroke="#999" stroke-width="2" stroke-dasharray="2.500 1"/></svg><span>Calendar</span></button></div><b>Calendar</b></div>
    <div class="g g11"><div class="gb"><button class="big dis w34"><svg width="24" height="24"><path d="M1.500 1h20v22h-20z" fill="#eee" stroke="#999" /><path d="M4 5h14M4 9h14M4 14h8M4 19h7" stroke="#888" stroke-width="1.600"/><path d="M13 13h11v11H13z" fill="#888"/><path d="M15 13h7v4h-7zM16 20h5v4h-5z" fill="#eee"/></svg><span>Save</span></button></div><b>Baseline</b></div>
    <div class="g g12"><div class="gb"><button class="big dis w34"><svg width="24" height="24" fill="#808080"><use href="#binoc"/></svg><span>Find</span></button><button class="big dis w38"><svg width="25" height="24"><path d="M1 1.500h12v9H1zM12 14.500h12v9H12z" fill="#f5f5f5" stroke="#888" stroke-width="1.500"/><path d="M14 6h5v7M16 10l3 3 3-3" fill="none" stroke="#888" stroke-width="1.500"/><text x="3" y="9" class="ic">ab</text><text x="14" y="22" class="ic">ac</text></svg><span>Replace</span></button><i class="vs tall"></i><button class="big dis w34"><svg width="22" height="24"><path d="M1.500 1.500h14v9h-14z" fill="#f5f5f5" stroke="#888" stroke-width="1.500"/><path d="M1 13h9v11H1z" fill="#999"/><path d="M10 6h11v13H10z" fill="#eee" stroke="#aaa"/><text x="4" y="9" class="ic">AI</text><path d="M17 8v8h-5" fill="none" stroke="#777" stroke-width="1.500"/></svg><span>Smart<br>Enter</span></button></div><b>Editing</b></div>
  </div>
  <div class="wbody">
    <nav class="side"><ul>
      <li><a href="#">All Reports</a></li><li><a href="#">Favorites</a></li><li><a href="#">Recent</a></li><li class="rule"><hr></li>
      <li><a href="#">Planning reports</a></li><li class="on"><a href="#">All tasks statuses</a></li><li><a href="#">MINDMAP Reports</a></li><li><a href="#">Executives, weekly</a></li><li><a href="#">Executives, monthly</a></li><li><a href="#">Project start</a></li><li><a href="#">Project finish</a></li><li><a href="#">Costs, monthly</a></li><li><a href="#">Phase start</a></li><li><a href="#">Current activities, weekly</a></li><li><a href="#">Visual reports</a></li><li><a href="#">Knowledge reports</a></li><li><a href="#">Resource usage, monthly</a></li><li><a href="#">Resource usage, weekly</a></li><li><a href="#">Current activities, monthly</a></li><li><a href="#">Resource usage loading</a></li><li><a href="#">Dashboards</a></li><li><a href="#">Project Management Diagrams</a></li>
    </ul></nav>
    <main class="reports">
      <h2>All tasks statuses</h2>
      <div class="cards">
        <figure><div class="thumb"><table class="mini m-a"><colgroup><col class="a1c"><col class="a2c"><col class="a3c"><col class="a4c"><col class="a4c"><col class="a5c"></colgroup>
          <tr><th>Unique ID</th><th>Name</th><th>Duration</th><th>Start</th><th>Finish</th><th></th></tr>
          <tr class="b"><td>1</td><td>New Product Launch</td><td>25,14 d</td><td>01.08.2016</td><td>05.09.2016</td><td></td></tr>
          <tr class="b"><td>2</td><td class="i1">Phase 1 - Planning the Launch</td><td>25,14 d</td><td>01.08.2016</td><td>05.09.2016</td><td></td></tr>
          <tr class="r18"><td>3</td><td class="i2">Define the launch group</td><td>2 d</td><td>01.08.2016</td><td>02.08.2016</td><td>Jam<br>Robe<br>[3],R</td></tr>
          <tr class="r12"><td>4</td><td class="i2">Define sales goals</td><td>0 d</td><td>03.08.2016</td><td>03.08.2016</td><td>Rich<br>Gar</td></tr>
          <tr class="r12"><td>5</td><td class="i2">Define launch goals (launch timing and<br>publicity objectives)</td><td>0 d</td><td>03.08.2016</td><td>03.08.2016</td><td>Rich</td></tr>
          <tr class="b"><td>6</td><td class="i2">Identify partners (if needed)</td><td>10,14 d</td><td>03.08.2016</td><td>17.08.2016</td><td></td></tr>
          <tr><td>7</td><td class="i3">Identify channel partners</td><td>10,14 d</td><td>03.08.2016</td><td>17.08.2016</td><td>Mar</td></tr>
          <tr><td>8</td><td class="i3">Identify retail partners</td><td>0 d</td><td>03.08.2016</td><td>03.08.2016</td><td>Mar</td></tr>
          <tr><td>9</td><td class="i3">Identify online opportunities</td><td>0 d</td><td>03.08.2016</td><td>03.08.2016</td><td>Mar</td></tr>
          <tr class="b"><td>10</td><td class="i2">Define Launch Budget</td><td>13 d</td><td>17.08.2016</td><td>05.09.2016</td><td></td></tr>
          <tr><td>11</td><td class="i3">Determine budget requirements</td><td>7 d</td><td>17.08.2016</td><td>26.08.2016</td><td>Rich</td></tr>
          <tr><td>12</td><td class="i3">Launch budget approval</td><td>6 d</td><td>26.08.2016</td><td>05.09.2016</td><td>Rich</td></tr>
          <tr class="e r12"><td></td><td></td><td></td><td></td><td></td><td></td></tr><tr class="e r12"><td></td><td></td><td></td><td></td><td></td><td></td></tr>
        </table></div><figcaption>Send tasks list</figcaption></figure>
        <figure><div class="thumb"><table class="mini m-b"><colgroup><col class="b1c"><col class="b2c"><col class="b3c"><col class="b4c"><col class="b4c"><col class="b5c"></colgroup>
          <tr class="r12"><th>Unique<br>ID</th><th>Name</th><th>Duration</th><th>Start</th><th>Finish</th><th>Complete</th></tr>
          <tr class="b"><td>1</td><td>New Product Launch</td><td>25.14 d</td><td>8/8/2016</td><td>9/12/2016</td><td>47 %</td></tr>
          <tr class="b"><td>2</td><td class="i1">Phase 1 - Planning the Launch</td><td>25.14 d</td><td>8/8/2016</td><td>9/12/2016</td><td>47 %</td></tr>
          <tr class="r20"><td>3</td><td class="i2">Define the launch group</td><td>2 d</td><td>8/8/2016</td><td>8/9/2016</td><td>0 %</td></tr>
          <tr class="r12"><td>4</td><td class="i2">Define sales goals</td><td>0 d</td><td>8/10/2016</td><td>8/10/2016</td><td>100 %</td></tr>
          <tr class="r12"><td>5</td><td class="i2">Define launch goals (launch timing and<br>publicity objectives)</td><td>0 d</td><td>8/10/2016</td><td>8/10/2016</td><td>100 %</td></tr>
          <tr class="b"><td>6</td><td class="i2">Identify partners (if needed)</td><td>10.14 d</td><td>8/10/2016</td><td>8/24/2016</td><td>59 %</td></tr>
          <tr><td>7</td><td class="i3">Identify channel partners</td><td>10.14 d</td><td>8/10/2016</td><td>8/24/2016</td><td>59 %</td></tr>
          <tr><td>8</td><td class="i3">Identify retail partners</td><td>0 d</td><td>8/10/2016</td><td>8/10/2016</td><td>100 %</td></tr>
          <tr class="r12"><td>9</td><td class="i3">Identify online opportunities</td><td>0 d</td><td>8/10/2016</td><td>8/10/2016</td><td>55 %</td></tr>
          <tr class="b"><td>10</td><td class="i2">Define Launch Budget</td><td>13 d</td><td>8/24/2016</td><td>9/12/2016</td><td>44 %</td></tr>
          <tr><td>11</td><td class="i3">Determine budget requirements</td><td>7 d</td><td>8/24/2016</td><td>9/2/2016</td><td>69 %</td></tr>
          <tr><td>12</td><td class="i3">Launch budget approval</td><td>6 d</td><td>9/2/2016</td><td>9/12/2016</td><td>14 %</td></tr>
        </table></div><figcaption>All Tasks Statuses</figcaption></figure>
      </div>
    </main>
  </div>
  <footer class="wfoot"><span class="s0">Ready</span><span class="s1">Budget: -</span><span class="s2">Actual Cost: -</span><span class="s3">Profit: -</span><svg class="s4" width="80" height="13"><path d="M0 1h13v3M3 5h8M6 9h7M3 12h7" stroke="#cfe6ff" stroke-width="2" fill="none"/><circle cx="24" cy="3" r="2.500" fill="#7cc4f5"/><path d="M20 10c0-6 8-6 8 0zM25 12l4-5 4 5z" fill="#e8f3ff"/><path d="M42 1h7v11h-7z" fill="#fff"/><path d="M49 2h5M49 6h5M49 10h5" stroke="#7cc4f5" stroke-width="2"/><path d="M63 2h3M63 6h3M63 11h3" stroke="#fff" stroke-width="3"/><path d="M68 2h7M68 6h7M68 11h7" stroke="#7cc4f5" stroke-width="2"/></svg><svg class="s5" width="100" height="13"><path d="M0 6.500h4M91 6.500h7M94.500 3v7" stroke="#fff" stroke-width="1.600"/><path d="M9 6.500h78" stroke="#c8d6ec"/><path d="M6 2h6v9H6z" fill="#fff"/></svg></footer>
</section>

<section class="xl">
  <header class="xh">
    <svg class="deco" width="460" height="53" fill="#e7e7e7"><path d="M0 0h3v31H0zM6 0h3v34H6zM12 0h3v31h-3zM18 0h3v45h-3zM26 0h3v20h-3zM37 0h8v30q-8-12-8-30zM55 0h10v36l-10-5zM71 0h12v38l-12-2zM93 0h3v37h-3zM101 0h3v35h-3zM109 0h3v32h-3zM117 0h3v26h-3zM125 0h3v20h-3z"/><path d="M158 0h26a13 13 0 0 1-26 0z"/><path fill-rule="evenodd" d="M202 21a20 20 0 1 1 40 0 20 20 0 1 1-40 0m8 0a12 12 0 1 0 24 0 12 12 0 1 0-24 0"/><circle cx="222" cy="21" r="6"/><path d="M252 0h16l30 52h-12q-26-12-34-52zM274 0h6l36 36-5 4zM288 0h6l32 26-4 6zM302 0h6l28 18-3 5zM340 0h32q0 32-22 53h-24q16-24 14-53zM404 0h8l-40 40-5-5zM420 0h8l-48 50-6-3zM438 0h8l-46 53h-9zM454 0h4l-40 53h-9z"/></svg>
    <div class="xt"><svg width="17" height="17"><path d="M8 2h8v13H8z" fill="#fff" stroke="#217346"/><path d="M10 5h5M10 8h5M10 11h5" stroke="#217346" stroke-width="1.500"/><path d="M0 2l10-2v17L0 15z" fill="#217346"/><path d="M3 5l4 7M7 5l-4 7" stroke="#fff" stroke-width="1.500"/></svg><h1>2017-11-01_13-13-42_All Tasks Statuses.xlsx - Excel</h1>
      <div class="xb"><button class="hq">?</button><button aria-label="Ribbon options"><svg width="13" height="11"><path d="M.5.5h12v10H.5zM.5 3h12M6.500 9V5M4.500 7l2-2 2 2" fill="none" stroke="#666"/></svg></button><button aria-label="Minimize"><svg width="9" height="11"><path d="M0 7.500h9" stroke="#555" stroke-width="2"/></svg></button><button aria-label="Maximize"><svg width="10" height="10"><path d="M.5.5h9v9h-9z" fill="none" stroke="#666"/><path d="M0 1h10" stroke="#666" stroke-width="2"/></svg></button><button aria-label="Close"><svg width="10" height="10"><path d="M1 1l8 8M9 1L1 9" stroke="#555" stroke-width="1.800"/></svg></button></div>
    </div>
    <nav class="xtabs"><button class="file">FILE</button><a href="#" class="on">HOME</a><a href="#">INSERT</a><a href="#">PAGE LAYOUT</a><a href="#">FORMULAS</a><a href="#">DATA</a><a href="#">REVIEW</a><a href="#">VIEW</a><span class="user">Svetlana Naumenko<i class="car"></i><svg width="24" height="24"><path d="M0 0h24v24H0z" fill="#ababab"/><circle cx="12" cy="9" r="5.500" fill="#fff"/><path d="M4 24c0-7 4-9 8-9s8 2 8 9z" fill="#fff"/></svg></span></nav>
  </header>
  <div class="xr">
    <div class="xg x1"><div class="xc top"><button class="xbig w40"><svg width="28" height="30"><path d="M0 3h24v26H0z" fill="#ecc787"/><path d="M6 6V2h4q2-3 4 0h4v4z" fill="#666"/><path d="M14.500 11.500h8l5 5v13h-13z" fill="#fff" stroke="#666"/><path d="M22.500 11.500v5h5" fill="none" stroke="#666"/></svg><span>Paste</span><i class="car"></i></button><div class="xcol"><button aria-label="Cut"><svg width="15" height="15"><path d="M4 0l6 9M11 0L5 9" stroke="#666" stroke-width="1.600"/><circle cx="3.500" cy="11.500" r="2.500" fill="none" stroke="#4a7fb5" stroke-width="1.300"/><circle cx="11.500" cy="11.500" r="2.500" fill="none" stroke="#4a7fb5" stroke-width="1.300"/></svg></button><button aria-label="Copy" class="cc"><svg width="15" height="15"><use href="#copy"/></svg><i class="car"></i></button><button aria-label="Format painter"><svg width="16" height="15"><use href="#brush"/></svg></button></div></div><b>Clipboard<svg width="8" height="8"><use href="#launch"/></svg></b></div>
    <div class="xg x2"><div class="xc rows"><div class="row"><span class="cb x111"><select aria-label="Font name"><option>Calibri</option></select></span><span class="cb x43"><select aria-label="Font size"><option>11</option></select></span><button class="t gA">A<sup>▴</sup></button><button class="t gB">A<sup>▾</sup></button></div>
      <div class="row"><button class="t on"><strong>B</strong></button><button class="t it">I</button><button class="t un">U</button><button class="c" aria-label="Underline options"><i class="car"></i></button><i class="vs"></i><button class="t" aria-label="Borders"><svg width="14" height="14"><use href="#grid"/></svg></button><button class="c" aria-label="Border options"><i class="car"></i></button><i class="vs"></i><button class="t" aria-label="Fill"><svg width="16" height="17"><path d="M3 7l5-5 5 5-5 5z" fill="#fff" stroke="#777"/><path d="M12 4q4 3 3 7q-2-1-2-4z" fill="#4a7fb5"/><path d="M7 0v4" stroke="#777"/><path d="M0 13h16v4H0z" fill="#ffc000"/></svg></button><button class="c" aria-label="Fill options"><i class="car"></i></button><button class="t fc"><strong>A</strong></button><button class="c" aria-label="Colour options"><i class="car"></i></button></div></div><b>Font<svg width="8" height="8"><use href="#launch"/></svg></b></div>
    <div class="xg x3"><div class="xc rows"><div class="row"><button class="t" aria-label="Top"><svg width="14" height="16"><path d="M0 1.500h14M0 5.500h14M0 9.500h14" stroke="#666"/></svg></button><button class="t on" aria-label="Middle"><svg width="14" height="12"><path d="M0 1.500h14M0 5.500h14M0 9.500h14" stroke="#555"/></svg></button><button class="t low" aria-label="Bottom"><svg width="14" height="10"><path d="M0 .5h14M0 4.500h14M0 8.500h14" stroke="#666"/></svg></button><i class="vs"></i><button class="t" aria-label="Orientation"><svg width="17" height="16" class="open"><path d="M5 15L15 6M15 6v4M15 6h-4" fill="none" stroke="#666" stroke-width="1.200"/><text x="1" y="10" class="ori" transform="rotate(-40 7 8)">ab</text></svg></button><button class="c" aria-label="Orientation options"><i class="car"></i></button><i class="gap"></i><i class="vs"></i><button class="lab on"><svg width="16" height="16"><path d="M0 1h9v3H0zM0 7h9v9H0zM2 10h5M2 13h5" fill="#fff" stroke="#666"/><path d="M9 2.500h6M14 6v5h-3M12.500 9l-2 2 2 2" stroke="#4a7fb5" fill="none" stroke-width="1.300"/></svg>Wrap Text</button></div>
      <div class="row"><button class="t" aria-label="Left"><svg width="14" height="13"><path d="M0 1.500h14M0 4.500h9M0 7.500h14M0 10.500h9" stroke="#666"/></svg></button><button class="t on" aria-label="Center"><svg width="14" height="13"><path d="M0 1.500h14M2 4.500h10M0 7.500h14M2 10.500h10" stroke="#444"/></svg></button><button class="t" aria-label="Right"><svg width="14" height="13"><path d="M0 1.500h14M5 4.500h9M0 7.500h14M5 10.500h9" stroke="#666"/></svg></button><i class="vs"></i><button class="t" aria-label="Decrease indent"><svg width="16" height="13"><path d="M3 1.500h13M9 4.500h7M9 7.500h7M3 10.500h13" stroke="#666"/><path d="M1 6h7M4 3L1 6l3 3" stroke="#4a7fb5" stroke-width="1.800" fill="none"/></svg></button><button class="t" aria-label="Increase indent"><svg width="16" height="13"><path d="M3 1.500h13M9 4.500h7M9 7.500h7M3 10.500h13" stroke="#666"/><path d="M0 6h7M4 3l3 3-3 3" stroke="#4a7fb5" stroke-width="1.800" fill="none"/></svg></button><i class="vs"></i><button class="lab"><svg width="15" height="15"><path d="M.5.5h14v14H.5zM.5 4h14M.5 11h14M7.500.5V4M7.500 11v3.500" stroke="#666" fill="none"/><path d="M2 7.500h11M4 5.500l-2 2 2 2M11 5.500l2 2-2 2" stroke="#4a7fb5" fill="none"/></svg>Merge &amp; Center</button><button class="c" aria-label="Merge options"><i class="car"></i></button></div></div><b>Alignment<svg width="8" height="8"><use href="#launch"/></svg></b></div>
    <div class="xg x4"><div class="xc rows"><div class="row"><span class="cb x130"><select aria-label="Number format"><option>General</option></select></span></div><div class="row"><button class="t num">$</button><button class="c" aria-label="Currency options"><i class="car"></i></button><button class="t num">%</button><button class="t num"><strong>,</strong></button><i class="vs"></i><button class="t dec"><span><em>←</em>.0</span><span>.00</span></button><button class="t dec"><span>.00</span><span><em>→</em>.0</span></button></div></div><b>Number<svg width="8" height="8"><use href="#launch"/></svg></b></div>
    <div class="xg x5"><div class="xc top"><button class="xbig w72"><svg width="30" height="30"><path d="M1.500.5h26v24h-26z" fill="#fff" stroke="#777"/><path d="M9 1h5v6H9zM9 13h8v6H9z" fill="#d9623a"/><path d="M9 7h11v6H9zM9 19h4v5H9z" fill="#4a7fb5"/><path d="M1 6.500h27M1 12.500h27M1 18.500h27M8.500 0v25M21.500 0v25" stroke="#999"/><path d="M15.500 17.500h14v12h-14z" fill="#fff" stroke="#555"/><path d="M19 22h7M19 25h7M25 19.500l-5 8" stroke="#333"/></svg><span>Conditional</span><span>Formatting<i class="car"></i></span></button><button class="xbig w58"><svg width="30" height="30"><path d="M.5 2.500h24v20H.5z" fill="#fff" stroke="#777"/><path d="M7 8h17v14H7z" fill="#bfd3ea"/><path d="M0 7.500h24M0 12.500h24M0 17.500h24M6.500 3v19M12.500 3v19M18.500 3v19" stroke="#999"/><path d="M29 8l-9 13-2-2z" fill="#777" stroke="#666"/><path d="M7 29q5-1 6-6 5-3 7 1 0 5-6 5z" fill="#4a7fb5"/></svg><span>Format as</span><span>Table<i class="car"></i></span></button><button class="xbig w42"><svg width="30" height="30"><path d="M1.500.5h24v22h-24z" fill="#fff" stroke="#777"/><path d="M1 5.500h24M1 17.500h24M6.500 1v21M20.500 1v21" stroke="#999"/><path d="M7 6h13v11H7z" fill="#bfd3ea"/><path d="M29 8l-9 12-2-2z" fill="#777" stroke="#666"/><path d="M7 28q5-1 6-6 5-3 7 1 0 5-6 5z" fill="#4a7fb5"/></svg><span>Cell</span><span>Styles<i class="car"></i></span></button></div><b>Styles</b></div>
    <div class="xg x6"><div class="xcol wide"><button><svg width="16" height="16"><path d="M1.500.5h7v4h-7zM1.500 11.500h7v4h-7zM5 .5v4M5 11.500v4" fill="none" stroke="#666"/><path d="M9.500 6.500h6v3h-6z" fill="#bfd3ea" stroke="#666"/><path d="M0 8h8M3 5L0 8l3 3" fill="none" stroke="#4a7fb5" stroke-width="1.500"/></svg>Insert<i class="car"></i></button><button><svg width="16" height="16"><path d="M1.500.5h7v4h-7zM1.500 11.500h7v4h-7zM5 .5v4M5 11.500v4M3.500 6.500h4v3h-4z" fill="none" stroke="#666"/><path d="M9 4l6 7M15 4l-6 7" stroke="#d9623a" stroke-width="1.800"/></svg>Delete<i class="car"></i></button><button><svg width="16" height="16"><path d="M1.500 5.500h13v9h-13zM1 8.500h14M1 11.500h14M5.500 5v10M10.500 5v10" fill="none" stroke="#666"/><path d="M5 8h5v4H5z" fill="#4a7fb5"/><path d="M2 1.500h12M2 0v3M14 0v3" stroke="#4a7fb5"/></svg>Format<i class="car"></i></button></div><b>Cells</b></div>
    <div class="xg x7"><div class="xc flush"><div class="xcol ed"><button aria-label="AutoSum"><svg width="15" height="15"><use href="#sigma"/></svg><i class="car"></i></button><button aria-label="Fill down"><svg width="14" height="16"><path d="M.5.5h13v15H.5z" fill="#fff" stroke="#666"/><path d="M0 2h14" stroke="#666" stroke-width="3"/><path d="M7 5v8M4 10l3 3 3-3" fill="none" stroke="#4a7fb5" stroke-width="1.800"/></svg><i class="car"></i></button><button aria-label="Clear"><svg width="15" height="14"><path d="M5 6l5-6 4 4-5 6z" fill="#e8899a"/><path d="M5 6l4 4-3 3H3L1 10z" fill="#fff" stroke="#e8899a"/></svg><i class="car"></i></button></div><button class="xbig w44"><svg width="30" height="30" class="open"><text x="1" y="13" class="az a">A</text><text x="1" y="30" class="az z">Z</text><path d="M12 9h17l-6 8v9l-4-2v-7z" fill="#777"/></svg><span>Sort &amp;</span><span>Filter<i class="car"></i></span></button><button class="xbig w44"><svg width="28" height="30" fill="#666"><use href="#binoc"/></svg><span>Find &amp;</span><span>Select<i class="car"></i></span></button></div><b>Editing</b></div>
    <button class="fold" aria-label="Collapse ribbon"><svg width="9" height="6"><path d="M1 5l3.500-4L8 5" fill="none" stroke="#666" stroke-width="1.500"/></svg></button>
  </div>
  <div class="qat"><button aria-label="Save"><svg width="14" height="14"><path d="M.5.5h13v13H.5z" fill="#fff" stroke="#7b4fa5" stroke-width="2"/><path d="M0 7h14M4 10h6v4H4z" fill="#7b4fa5" stroke="#7b4fa5"/></svg></button><button aria-label="Undo" class="d"><svg width="14" height="14"><path d="M1 5h8q4 1 4 4 0 3-5 4M5 1L1 5l4 4" fill="none" stroke="#2f6aa8" stroke-width="2.200"/></svg><i class="car"></i></button><button aria-label="Redo" class="d"><svg width="14" height="14"><path d="M13 5H5Q1 6 1 9q0 3 5 4M9 1l4 4-4 4" fill="none" stroke="#b8b8b8" stroke-width="2.200"/></svg><i class="car lt"></i></button><button aria-label="Borders" class="d"><svg width="14" height="14"><use href="#grid"/></svg><i class="car"></i></button><button aria-label="Copy"><svg width="15" height="15"><use href="#copy"/></svg></button><button aria-label="New"><svg width="12" height="14"><path d="M.5.5h7l4 4v9H.5zM7.500.5v4h4" fill="#fff" stroke="#666"/></svg></button><button aria-label="Sum"><svg width="15" height="15"><use href="#sigma"/></svg></button><button aria-label="Preview"><svg width="14" height="16"><path d="M.5.5h8l4 4v11H.5z" fill="#fff" stroke="#666"/><circle cx="7" cy="8" r="3.500" fill="none" stroke="#555" stroke-width="1.300"/><path d="M9.500 11l4 4" stroke="#555" stroke-width="2"/></svg></button><button aria-label="Painter"><svg width="16" height="15"><use href="#brush"/></svg></button><button class="gA">A<sup>▴</sup></button><button aria-label="More"><svg width="6" height="8"><path d="M0 1h6" stroke="#666"/><path d="M0 4h6L3 7.500z" fill="#666"/></svg></button></div>
  <div class="fx"><span class="cb namebox"><select aria-label="Name box"><option>A1</option></select></span><svg width="3" height="12" class="dots"><path d="M1.500 0v12" stroke="#aaa" stroke-width="2" stroke-dasharray="2 3"/></svg><div class="fb"><button aria-label="Cancel"><svg width="11" height="10"><path d="M1 0l9 10M10 0L1 10" stroke="#c0c0c0" stroke-width="1.500"/></svg></button><button aria-label="Enter"><svg width="13" height="11"><path d="M1 6l4 4 7-9" fill="none" stroke="#c0c0c0" stroke-width="2"/></svg></button><button class="fn">f<sub>x</sub></button></div><div class="fi"><input type="text" aria-label="Formula" value="Unique ID"><svg width="9" height="7"><path d="M1 1l3.500 4L8 1" fill="none" stroke="#666" stroke-width="2"/></svg></div></div>
  <div class="sheet">
    <table class="cells">
      <colgroup><col class="r0"><col class="cA"><col class="cB"><col class="cC"><col class="cD"><col class="cE"><col class="cF"><col class="cG"><col class="cH"><col class="cI"></colgroup>
      <thead><tr><th><svg width="12" height="12"><path d="M12 0v12H0z" fill="#ddd"/></svg></th><th class="on">A</th><th>B</th><th>C</th><th>D</th><th>E</th><th>F</th><th>G</th><th>H</th><th>I</th></tr></thead>
      <tbody>
      <tr class="hd"><th>1</th><td class="cur">Unique ID</td><td>Name</td><td>Duration</td><td>Start</td><td>Finish</td><td>Complete</td><td>Resource Name</td><td></td><td></td></tr>
      <tr class="d b"><th>2</th><td>19</td><td>New Product Launch</td><td>42.14 d</td><td>9/19/2017</td><td>11/16/2017</td><td>76 %</td><td></td><td></td><td></td></tr>
      <tr class="d b"><th>3</th><td>20</td><td class="i1">Phase 1 - Planning the Launch</td><td>42.14 d</td><td>9/19/2017</td><td>11/16/2017</td><td>76 %</td><td></td><td></td><td></td></tr>
      <tr class="d b"><th>4</th><td>28</td><td class="i2">Define Launch Budget</td><td>13 d</td><td>10/30/2017</td><td>11/16/2017</td><td>59 %</td><td></td><td></td><td></td></tr>
      <tr class="d"><th>5</th><td>29</td><td class="i3">Determine budget requirements</td><td>7 d</td><td>10/30/2017</td><td>11/8/2017</td><td>69 %</td><td>Richard Miller</td><td></td><td></td></tr>
      <tr class="d"><th>6</th><td>30</td><td class="i3">Launch budget approval</td><td>6 d</td><td>11/8/2017</td><td>11/16/2017</td><td>48 %</td><td>Richard Miller</td><td></td><td></td></tr>
      <tr class="d"><th>7</th><td>31</td><td class="i2">Planning Complete</td><td>0 d</td><td>11/16/2017</td><td>11/16/2017</td><td>0 %</td><td></td><td></td><td></td></tr>
      <tr><th>8</th><td></td><td></td><td></td><td></td><td></td><td></td><td></td><td></td><td></td></tr>
      <tr><th>9</th><td></td><td></td><td></td><td></td><td></td><td></td><td></td><td></td><td></td></tr>
      <tr><th>10</th><td></td><td></td><td></td><td></td><td></td><td></td><td></td><td></td><td></td></tr>
      <tr><th>11</th><td></td><td></td><td></td><td></td><td></td><td></td><td></td><td></td><td></td></tr>
      <tr><th>12</th><td></td><td></td><td></td><td></td><td></td><td></td><td></td><td></td><td></td></tr>
      </tbody>
    </table>
    <div class="vbar"><button aria-label="Scroll up"><svg width="7" height="4"><path d="M0 4h7L3.500 0z" fill="#666"/></svg></button><i></i></div>
  </div>
  <nav class="stabs"><div class="nv"><button aria-label="Previous sheet"><svg width="5" height="8"><path d="M5 0v8L1 4z" fill="#bbb"/></svg></button><button aria-label="Next sheet"><svg width="5" height="8"><path d="M0 0v8l4-4z" fill="#0a6332"/></svg></button></div><a href="#" class="on">Marketing Research</a><a href="#" class="t1">Planning the Launch</a><a href="#" class="t2">Start</a><a href="#" class="t3">Execution</a><a href="#" class="t4">Release To</a><button class="more">...</button><button aria-label="New sheet"><svg width="17" height="17"><circle cx="8.500" cy="8.500" r="7.500" fill="none" stroke="#777"/><path d="M8.500 5v7M5 8.500h7" stroke="#666" stroke-width="1.600"/></svg></button><svg width="3" height="12" class="dots"><path d="M1.500 0v12" stroke="#aaa" stroke-width="2" stroke-dasharray="2 3"/></svg><div class="hbar"><button aria-label="Scroll left"><svg width="4" height="7"><path d="M4 0v7L0 3.500z" fill="#555"/></svg></button><i></i><em></em><button aria-label="Scroll right"><svg width="4" height="7"><path d="M0 0v7l4-3.500z" fill="#555"/></svg></button></div></nav>
  <footer class="xfoot"><span>READY</span><div class="vw"><button class="on" aria-label="Normal"><svg width="13" height="13"><path d="M.5.500h12v12H.5zM.5 4.500h12M.5 8.500h12M4.500.5v12M8.500.5v12" fill="none" stroke="#fff"/></svg></button><button aria-label="Page layout"><svg width="14" height="13"><path d="M.5.500h13v12H.5zM3.500 2.500h7v8h-7zM5 4.500h4M5 6.500h4M5 8.500h4" fill="none" stroke="#fff"/></svg></button><button aria-label="Page break"><svg width="14" height="13"><path d="M.5.500h13v12H.5z" fill="none" stroke="#fff"/><path d="M2 1h4v7H2zM8 1h3v7H8z" fill="#fff"/></svg></button></div><svg class="zm" width="124" height="12"><path d="M11 6h101" stroke="#fff"/><path d="M1 6h6M115 6h8M119 2v8" stroke="#fff" stroke-width="2"/><path d="M59 0h4v12h-4z" fill="#fff"/></svg><output>100%</output></footer>
</section>
</body>
</html>
```
FILE: styles.css
```css
*{box-sizing:border-box}
body{margin:0;background:#fff;font-family:"Noto Sans",sans-serif;color:#444}
button{border:0;background:none;padding:0;margin:0;font:inherit;color:inherit;display:flex;align-items:center;justify-content:center}
a{color:inherit;text-decoration:none}
svg{display:block;flex:none}
.open{overflow:visible}
h1,h2,figure,ul{margin:0;padding:0;font-weight:400}
ul{list-style:none}
table{border-spacing:0;table-layout:fixed}
input,select{font:inherit;color:inherit;border:0;padding:0;margin:0;background:none;min-width:0;outline:0}
input::placeholder{color:#8a8a8a;opacity:1}
.defs{position:absolute;width:0;height:0}
.car{width:0;height:0;border:3px solid transparent;border-top:4px solid #666;border-bottom:0;flex:none;display:inline-block}
.car.lt{border-top-color:#bbb}
.cb{position:relative;display:flex;border:1px solid #ababab;background:#fff}
.cb select{appearance:none;width:100%;opacity:1;padding-left:3px;color:#222}
.cb::after{content:"";position:absolute;right:4px;top:50%;margin-top:-2px;border:3px solid transparent;border-top:4px solid #666;border-bottom:0;pointer-events:none}

/* task planner */
.mac{font-family:Inter,sans-serif;font-size:11px;color:#222;background:#ececec}
.mac-bar{height:50px;padding:8px 11px 0 9px;display:flex;background:linear-gradient(#e3e1e3,#cfcdcf);border-bottom:1px solid #b2b0b2}
.tool{display:flex;flex-direction:column;align-items:center;gap:2px;line-height:14px;white-space:nowrap;color:#333}
.tool button,.search{height:22px;width:44px;background:#fcfcfc;border-radius:4px;box-shadow:0 1px 1px #aaa}
.tool button.wide{width:50px;gap:7px}
.seg{display:flex;box-shadow:0 1px 1px #aaa;border-radius:4px;overflow:hidden;width:100%}
.tool .seg button{border-radius:0;box-shadow:none;flex:1;border-right:1px solid #e2e2e2}
.tool .seg button.on{background:#666}
.views{width:228px}
.micro{width:76px;margin-left:10px}
.edit{display:flex;gap:5px;margin-left:124px}
.add{width:50px}.indent{width:75px}.outdent{width:86px}.link{width:54px}
.right{display:flex;gap:9px;margin-left:auto}
.cal{width:48px}.theme{width:50px}.find,.search{width:120px!important}.filter{width:62px}.info{width:102px}
.search{display:flex;align-items:center;gap:4px;padding-left:22px}
.search input{width:70px}
.pair{display:grid;grid-template-columns:46px 56px;text-align:center;width:102px}
.project{display:flex;align-items:flex-start;background:#fff;font-family:"Liberation Sans",sans-serif;color:#111;height:708px;border-bottom:1px solid #999}
.tasks{width:629px;flex:none;font-size:9px;line-height:10px}
.k1{width:25px}.k2{width:24px}.k3{width:236px}.k4{width:70px}.k5{width:94px}.k6{width:90px}
.tasks th{height:39px;background:#e9e9e9;font-size:12px;font-weight:400;padding:0;border-right:1px solid #9a9a9a;border-bottom:1px solid #999}
.tasks td{height:24px;padding:0;border-right:1px solid #c8c8c8;border-bottom:1px solid #c8c8c8;text-align:center}
.tasks .h2 td{height:39px}
.tasks .h3 td{height:55px}
.tasks tr:nth-child(even) td{background:#ebf2fe}
.tasks tbody td:first-child{background:#e9e9e9;font-size:12px;font-weight:400;text-align:right;padding-right:2px;border-color:#999}
.tasks td:nth-child(2){padding-left:1px}
.tasks td:nth-child(3){text-align:left}
.tasks td:nth-child(4){text-align:right;padding-right:2px}
.b td{font-weight:700}
.tasks .sel td{background:#b3d2fb;border-bottom:1px solid #4b87d9;box-shadow:0 -1px #4b87d9;border-right-color:#9dbce8}
.tasks .sel td:nth-child(3){background:#94bdfb;color:#0c2d66;border-right:1px solid #4b87d9;box-shadow:inset 1px 0 #4b87d9,0 -1px #4b87d9}
.tasks .sel td:first-child{border-bottom:1px solid #999;box-shadow:none}
.tasks .sel .st,.tasks .sel .tl{opacity:.8}
.l0{padding-left:4px!important}.l1{padding-left:20px!important}.l2{padding-left:36px!important}.l3{padding-left:50px!important}.l4{padding-left:66px!important}
.tg{width:9px;height:10px;display:inline-block;margin-right:5px;vertical-align:-1px}
.tl{width:12px;height:12px}
.st{width:60px;height:12px;margin-left:1px}
.gantt{flex:1;min-width:0;margin:0 5px 0 1px;border-left:2px solid #d4d4d4;overflow:hidden}
.months,.weeks{display:flex;background:#e9e9e9;font-size:10px;white-space:nowrap}
.months{height:19px;line-height:18px;border-bottom:1px solid #999}
.weeks{height:20px;line-height:20px;border-bottom:1px solid #999;padding-left:0}
.months span{padding-left:4px;border-right:1px solid #aaa}
.months .m1{width:131px;padding-left:0;font-style:italic;text-indent:-2px}.months .m2{width:213px}.months .m3{width:205px}
.months span:last-child{border:0}
.weeks span{width:48px;flex:none;text-align:center;border-right:1px solid #aaa}
.weeks span:first-child{width:35px;text-align:left}
.chart{width:100%}
.who{font:9px "Liberation Sans",sans-serif;fill:#111}
.mac-tabs{display:flex;gap:1px;height:22px;background:#dcdcdc}
.mac-tabs a{height:20px;line-height:21px;padding:0 5px 0 5px;background:#e2e2e2;border:1px solid #aaa;border-top:0;border-radius:0 0 5px 5px}
.mac-tabs a.on{background:#ababab;padding-left:4px}
.mac-foot{height:20px;display:flex;align-items:center;white-space:nowrap}
.ops{display:flex;background:#fff;height:20px;width:67px;border:1px solid #c4c4c4}
.ops button{width:20px;border-right:1px solid #c4c4c4}
.ops .gear{flex:1;border:0}
.f1{margin-left:284px;width:227px}.f2{width:231px}.f3{width:120px}
.scale{display:flex;align-items:center;margin-left:auto;margin-right:11px;gap:7px;font-size:9px}
.scale svg{margin-left:11px}
.scale input{appearance:none;width:153px;height:14px;background:linear-gradient(90deg,#3b99fc 40%,#b5b5b5 0) center/100% 3px no-repeat}
.scale input::-webkit-slider-thumb{appearance:none;width:14px;height:14px;border-radius:7px;background:#fff;box-shadow:0 0 2px #777}

/* report browser */
.win{margin:11px 1px 0;border:1px solid #b4b4b4;padding:0 2px 2px;background:#f0f0f0;font-size:9px}
.wt{height:21px;display:flex;align-items:center;justify-content:space-between}
.wt h1{font-size:9px;color:#333;flex:1;text-align:center;padding-right:20px}
.qi{margin-left:3px}
.wb{display:flex;width:154px;justify-content:flex-end;align-self:flex-start;margin-right:-2px}
.wb button{width:21px;height:17px}
.wb .x{width:35px;background:#c75050;margin-left:5px}
.wtabs{height:20px;display:flex;align-items:stretch;background:#fff;line-height:19px;border-bottom:1px solid #ddd;color:#444}
.wtabs .file{width:45px;background:#2b579a;color:#fff}
.wtabs a{padding:0 12px}
.wtabs .on{margin-left:5px;border:1px solid #ddd;border-top:0;border-bottom:0;background:#fff;color:#2b579a;height:20px;width:49px;padding:0;text-align:center}
.ws{margin-left:auto;display:flex;align-items:center;gap:4px}
.ws input{width:95px;height:18px;border:1px solid #ababab;padding-left:3px}
.q{font:700 9px "Noto Sans",sans-serif;fill:#fff}
.ribbon{height:76px;background:#fff;display:flex;border-bottom:1px solid #d4d4d4;line-height:10px;padding-top:4px}
.g{display:flex;flex-direction:column;height:66px;border-right:1px solid #e1e1e1;flex:none}
.g b,.xg b{font-weight:400;color:#666;display:flex;justify-content:center;align-items:center;position:relative}
.g b{height:11px;gap:2px}
.far{position:absolute;right:4px;top:2px}
.gb{height:55px;display:flex;justify-content:center;padding-top:1px}
.gb.v{flex-direction:column;justify-content:flex-start;padding:6px 4px 0}
.g1{width:87px}.g2{width:135px}.g3{width:223px}.g4{width:67px}.g5{width:188px}.g6{width:77px}.g7{width:99px}.g8{width:82px}.g9{width:60px}.g10{width:50px}.g11{width:43px}.g12{width:118px}
.big{flex-direction:column;justify-content:flex-start;padding-top:2px;height:54px;color:#333;white-space:nowrap}
.big span{margin-top:5px}
.big .car{margin-top:4px;border-top-width:3px}
.big.on{background:#c2d5f2}
.dis{color:#aaa}
.w32{width:32px}.w33{width:33px}.w34{width:34px}.w36{width:36px}.w38{width:38px}.w43{width:43px}.w46{width:46px}.w55{width:55px}.w64{width:64px}
.sm{gap:3px;white-space:nowrap}
.col2{display:flex;flex-direction:column;gap:12px;align-items:flex-start;padding-top:8px;margin-left:3px}
.col3{display:flex;flex-direction:column;gap:6px;align-items:flex-start;padding-top:2px;margin-left:3px}
.combos{display:flex}
.combos .cb{height:18px;border-color:#d9d9d9}
.combos .cb::after{border-top-color:#bbb}
.c95{width:95px}.c31{width:32px;margin-left:-1px}
.ftrow{display:flex;align-items:center;gap:4px;height:30px;color:#999}
.vs{width:1px;height:22px;background:#d5d5d5;flex:none}
.vs.tall{height:54px}
.ab{font-family:"Liberation Serif",serif;font-weight:700;gap:1px}
.a1,.a2{font-family:"Liberation Serif",serif;font-weight:700;font-size:14px;margin-left:2px}
.a2{font-size:12px}
.a1 sup,.a2 sup{font-size:7px;line-height:1;align-self:flex-start}
.ic{font:700 8px "Noto Sans",sans-serif;fill:#777}
.wbody{display:flex;min-height:651px;background:#fff}
.side{width:240px;border-right:1px solid #aaa;font-size:11px;color:#2b579a}
.side ul{height:473px;display:flex;flex-direction:column}
.side li{flex:1;display:flex;align-items:center;padding-left:12px}
.side .on{background:#c2d5f2}
.side hr{width:176px;margin:0;border:0;border-top:1px solid #6f8fbf}
.reports{flex:1;padding:26px 10px 0 29px}
.reports h2{font-size:17px;line-height:26px;font-weight:700;color:#1f4788;border-bottom:2px solid #8ba0c4}
.cards{display:flex;gap:34px;padding:12px 17px}
figcaption{font-size:10px;line-height:17px;text-align:center;color:#222}
.thumb{width:204px;height:115px;overflow:hidden}
.mini{font:4px/6px "Liberation Sans",sans-serif;color:#222;width:203px;border-left:1px solid #777}
.mini th,.mini td{height:6px;padding:0;border-right:1px solid #777;border-bottom:1px solid #777;text-align:center;overflow:hidden;white-space:nowrap;line-height:5px}
.mini th{background:#c5d9f1}
.mini td:nth-child(2){text-align:left}
.mini .r12>*{height:12px}.mini .r18>*{height:18px}.mini .r20>*{height:20px}
.mini .e td{border-color:#ddd}
.mini .i1{padding-left:3px}.mini .i2{padding-left:6px}.mini .i3{padding-left:9px}
.a1c{width:23px}.a2c{width:96px}.a3c{width:21px}.a4c{width:27px}.a5c{width:9px}
.b1c{width:20px}.b2c{width:94px}.b3c{width:20px}.b4c{width:23px}.b5c{width:23px}
.wfoot{height:16px;background:#2b579a;color:#fff;display:flex;align-items:center;padding-left:3px;white-space:nowrap}
.s0{width:607px}.s1{width:131px}.s2{width:138px}.s3{width:139px}.s4{width:80px}.s5{margin-left:60px}

/* spreadsheet */
.xl{margin:12px 150px 0 2px;border:1px solid #217346;border-bottom:0;font-size:11px;color:#444;background:#fff}
.xh{position:relative}
.deco{position:absolute;right:0;top:0}
.xt{height:28px;display:flex;align-items:center;padding:0 0 0 10px;position:relative}
.xt h1{font-size:11px;flex:1;text-align:center;padding-left:115px}
.xb{display:flex;align-items:center}
.xb button{width:29px;height:20px}
.xb .hq{font-weight:700;font-size:13px;color:#666}
.xb button:last-child{width:30px;padding-right:0}
.xtabs{height:25px;display:flex;position:relative;border-bottom:1px solid #d4d4d4;font-size:12px;line-height:25px}
.xtabs .file{width:59px;background:#217346;color:#fff;font-size:12px;height:25px}
.xtabs a{padding:0 14px}
.xtabs .on{margin-left:4px;width:62px;padding:0;text-align:center;border:1px solid #d4d4d4;border-bottom:0;color:#217346;background:#fff;height:25px;line-height:24px}
.user{margin-left:auto;display:flex;align-items:center;gap:8px;font-size:11px;padding-right:10px}
.xr{height:92px;display:flex;padding-top:4px;border-bottom:1px solid #d4d4d4;position:relative}
.xg{display:grid;grid-template-rows:73px 11px;height:84px;border-right:1px solid #e1e1e1}
.xg b svg{position:absolute;right:4px;top:3px}
.xc{display:flex;height:66px}
.xc.rows{flex-direction:column;gap:8px;padding-top:7px}
.row{display:flex;height:23px;align-items:center}
.x1{width:86px}.x2{width:207px;padding-left:4px}.x3{width:264px;padding-left:4px}.x4{width:140px;padding-left:4px}.x5{width:181px;padding-left:4px}.x6{width:84px;padding-left:7px}.x7{width:130px;padding-left:4px}
.xbig{flex-direction:column;justify-content:flex-start;padding-top:4px;line-height:16px;white-space:nowrap}
.xbig svg{margin-bottom:4px}
.xbig .car{margin-left:3px;vertical-align:2px}
.xbig>.car{margin-top:7px}
.w40{width:49px}.w72{width:72px}.w58{width:58px}.w42{width:42px}.w44{width:44px}
.xcol{display:flex;flex-direction:column;width:38px}
.xcol button{height:23px;justify-content:flex-start;gap:6px;padding-left:2px}
.xcol.wide{width:76px}
.xcol.wide button{padding:0;gap:4px}
.xcol.wide .car{margin-left:5px}
.xcol.ed{width:36px}
.x111{width:112px;height:24px}.x43{width:43px;height:24px;margin-left:-1px}.x130{width:131px;height:24px}
.t{width:22px;height:23px}
.t.low{align-items:flex-end}
.t.on,.lab.on{background:#9fd5b7}
.c{width:12px;height:23px}
.gap{width:10px}
.row .vs{margin:0 4px}
.lab{height:23px;gap:5px;padding:0 6px 0 3px;white-space:nowrap}
.it{font:italic 700 13px "Liberation Serif",serif}
.un{font-weight:700;text-decoration:underline}
.fc strong{border-bottom:4px solid red;line-height:13px;width:16px;font-size:13px}
.gA,.gB{font-size:14px}
.gB{font-size:12px}
.gA sup,.gB sup{font-size:8px;line-height:1;align-self:flex-start;color:#4a7fb5}
.t.gA{margin-left:5px}
.num{font-size:14px;color:#666}
.dec{flex-direction:column;font-size:8px;line-height:9px;align-items:flex-end;padding-right:3px}
.dec em{font-style:normal;color:#2f6aa8}
.ori{font:700 8px "Noto Sans",sans-serif;fill:#666}
.az{font:700 14px "Noto Sans",sans-serif}
.az.a{fill:#4a7fb5}.az.z{fill:#9b5fb8}
.fold{margin:75px 0 0 auto;width:30px;height:10px}
.qat{height:37px;display:flex;align-items:center;padding:0 0 8px 3px;gap:7px}
.qat button{width:22px;height:22px}
.qat .d{width:33px;gap:6px}
.fx{height:26px;display:flex;align-items:stretch;padding:0 6px 0 5px;font-size:12px;color:#444}
.namebox{width:101px;border-color:#c6c6c6}
.namebox select{padding-left:6px;color:#444}
.namebox::after{right:6px}
.dots{align-self:center}
.fx .dots{margin:0 14px}
.fb{width:110px;border:1px solid #c6c6c6;display:flex;justify-content:space-around}
.fn{font:italic 700 15px "Liberation Serif",serif;color:#666}
.fn sub{font-size:9px}
.fi{flex:1;border:1px solid #c6c6c6;margin-left:3px;display:flex;align-items:center;padding-right:3px}
.fi input{flex:1;padding-left:10px;font-size:13px}
.sheet{height:278px;padding-top:10px;display:flex;overflow:hidden}
.cells{width:1105px;flex:none;font-size:13px;line-height:18px;color:#111;border-right:1px solid #aaa}
.r0{width:26px}.cA{width:67px}.cB{width:354px}.cC{width:63px}.cD{width:85px}.cE{width:85px}.cF{width:67px}.cG{width:235px}.cH{width:64px}.cI{width:59px}
.cells th{font-weight:400;font-size:12px;color:#555;padding:0;border-bottom:1px solid #d4d4d4;border-right:1px solid #aaa}
.cells thead th{height:20px;border-right:1px solid #ddd;border-bottom:1px solid #aaa;vertical-align:middle;line-height:18px}
.cells thead th:first-child svg{margin-left:11px}
.cells thead .on{background:#e1e1e1;color:#217346;font-weight:700}
.cells td{height:20px;padding:0;border-right:1px solid #d4d4d4;border-bottom:1px solid #d4d4d4;text-align:center;white-space:nowrap}
.cells .b td,.cells .hd td{font-weight:700;font-size:12px}
.cells .hd td{height:40px}
.cells .hd th{vertical-align:bottom;background:#e1e1e1;color:#217346;font-weight:700}
.cells .hd td:nth-child(-n+8),.cells .d td:nth-child(-n+8){border-color:#111}
.cells .hd td:nth-child(-n+8){background:#c5d9f1}
.cells .d td:nth-child(3),.cells .d td:nth-child(8){text-align:left;padding-left:2px}
.cells .hd .cur{outline:2px solid #217346;outline-offset:-1px;box-shadow:inset 0 0 0 2px #fff}
.cells .d .i1{padding-left:11px!important}.cells .d .i2{padding-left:20px!important}.cells .d .i3{padding-left:29px!important}
.vbar{width:15px;margin:2px 0 0 3px;border:1px solid #ababab;border-bottom:0;height:266px}
.vbar button{width:13px;height:15px;border-bottom:2px solid #ababab}
.stabs{height:28px;background:#f5f5f5;border-top:1px solid #ababab;display:flex;align-items:stretch;line-height:27px;font-size:12px;color:#555}
.nv{width:99px;display:flex;gap:24px;padding-left:26px}
.stabs a{text-align:center;white-space:nowrap;position:relative}
.stabs a.on{width:146px;background:#fff;border:1px solid #ababab;border-top:0;border-bottom:2px solid #217346;color:#217346;font-weight:700;height:25px;margin-top:-1px}
.t1{width:151px}.t2{width:53px}.t3{width:84px}.stabs .t4{width:74px;padding-left:14px;text-align:left}
.t1::after,.t2::after,.t3::after{content:"";position:absolute;right:0;top:4px;height:20px;border-right:1px solid #ababab}
.more{color:#217346;font-weight:700;width:26px}
.stabs>button:nth-of-type(2){width:26px}
.stabs .dots{margin:0 14px 0 13px}
.hbar{flex:1;margin:6px 22px 6px 0;display:flex}
.hbar button{width:15px;border:1px solid #ababab;background:#fff}
.hbar i{flex:1;border:1px solid #ababab;background:#fff}
.hbar em{width:48px;background:#e8e8e8}
.xfoot{height:23px;background:#217346;color:#fff;display:flex;align-items:center;padding-left:7px;font-size:10px}
.vw{display:flex;margin-left:auto;height:23px}
.vw button{width:38px}
.vw .on{background:#0a6332}
.zm{margin-left:5px}
.xfoot output{width:43px;height:23px;line-height:22px;background:#439467;text-align:center;font-size:11px;margin:0 12px 0 7px}
```
